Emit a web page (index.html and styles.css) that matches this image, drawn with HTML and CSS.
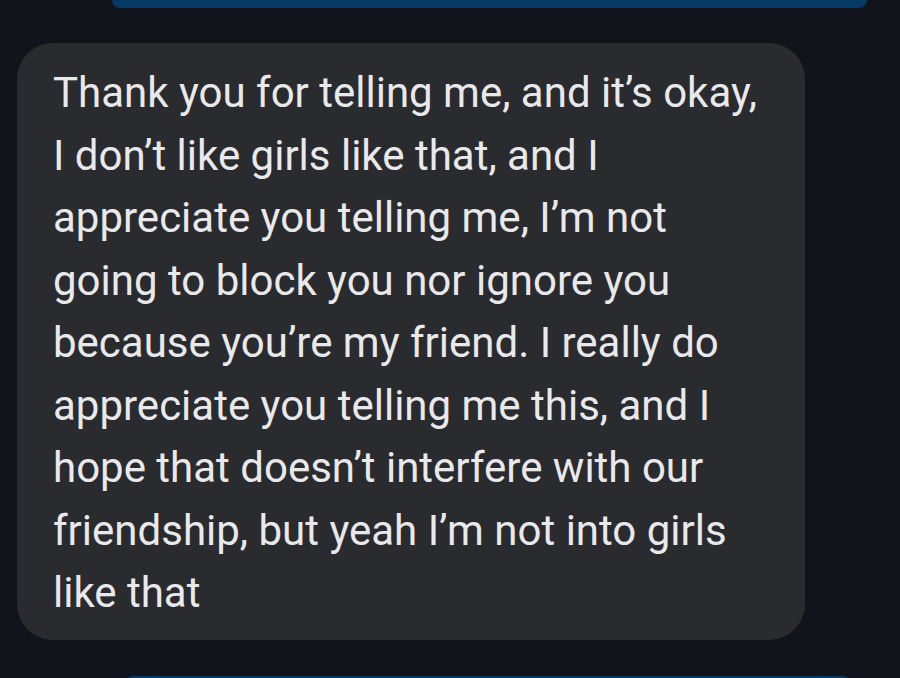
FILE: index.html
```html
<!DOCTYPE html>
<html lang="en">
<head>
    <meta charset="UTF-8">
    <title>Message</title>
    <link rel="stylesheet" href="styles.css">
</head>
<body>

<div class="thread">
    <div class="sent sent-top"></div>

    <div class="received">
        Thank you for telling me, and it’s okay,<br>
        I don’t like girls like that, and I<br>
        appreciate you telling me, I’m not<br>
        going to block you nor ignore you<br>
        because you’re my friend. I really do<br>
        appreciate you telling me this, and I<br>
        hope that doesn’t interfere with our<br>
        friendship, but yeah I’m not into girls<br>
        like that
    </div>

    <div class="sent sent-bottom"></div>
</div>

</body>
</html>
```

FILE: styles.css
```css
* {
    padding: 0;
    margin: 0;
    box-sizing: border-box;
}
body {
    background: #11141b;
    overflow: hidden;
    height: 678px;
}
.thread {
    display: flex;
    flex-direction: column;
}
.sent {
    background: #063a66;
}
.sent-top {
    height: 8px;
    margin-left: 112px;
    width: 755px;
    border-radius: 0 0 24px 24px;
}
.received {
    margin-top: 35px;
    margin-left: 17px;
    width: 788px;
    height: 597px;
    padding: 19px 0 0 36px;
    border-radius: 36px;
    background: #2a2b2f;
    color: #e9e9ec;
    font-family: Roboto, "Open Sans", sans-serif;
    font-size: 42px;
    line-height: 62.5px;
    white-space: nowrap;
}
.sent-bottom {
    margin-top: 36px;
    margin-left: 122px;
    width: 732px;
    height: 24px;
    border-radius: 12px 12px 0 0;
}
```
